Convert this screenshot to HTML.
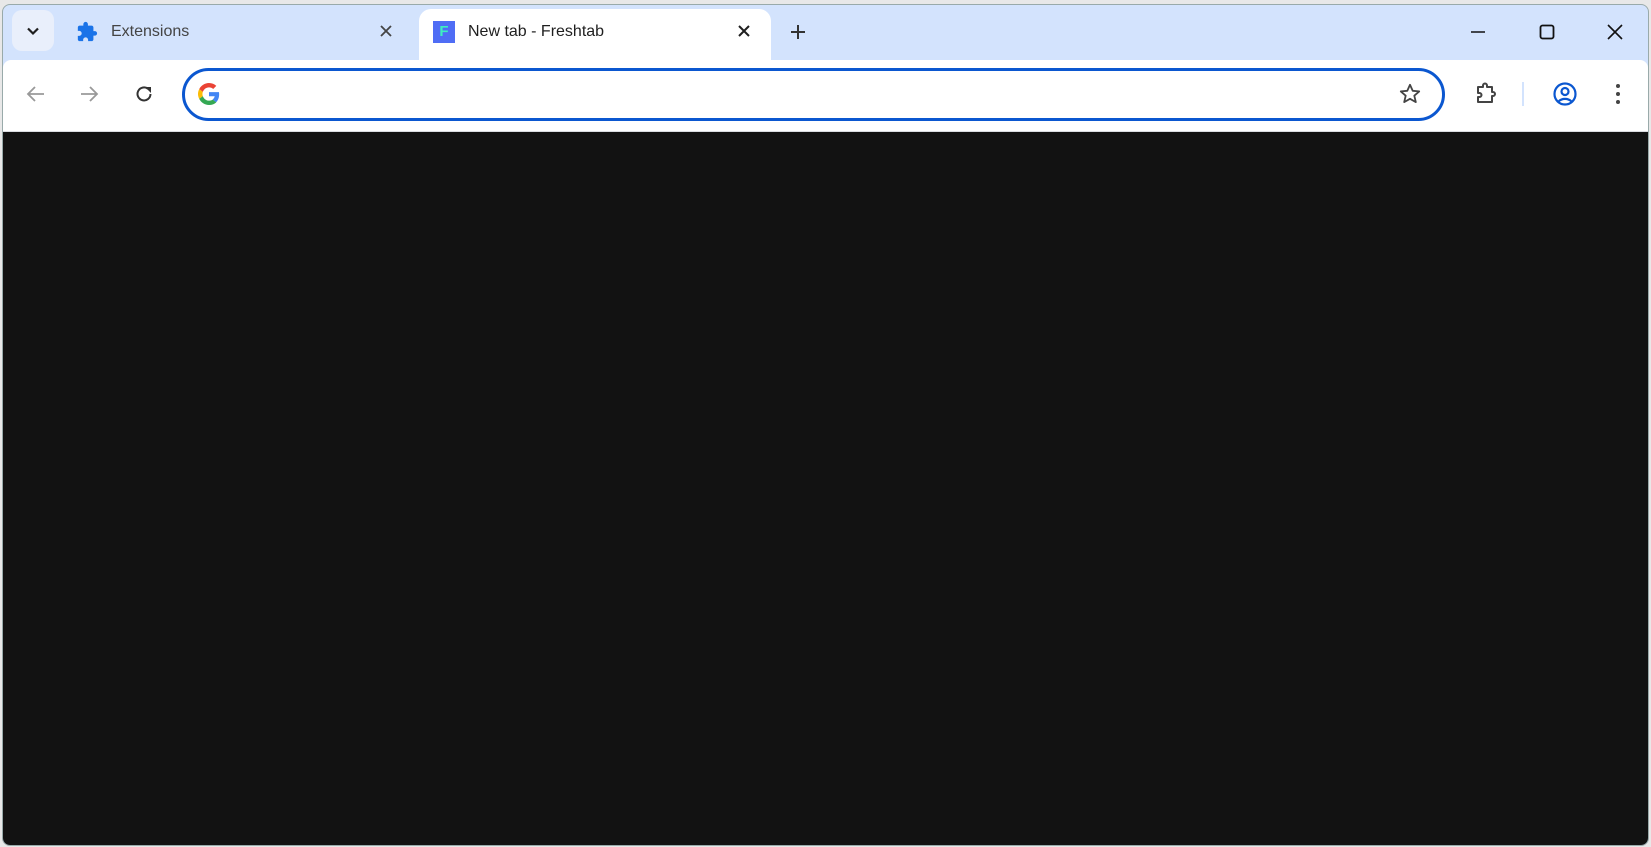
<!DOCTYPE html>
<html><head><meta charset="utf-8"><style>
*{margin:0;padding:0;box-sizing:border-box}
body{width:1651px;height:847px;background:#e8e8e8;position:relative;overflow:hidden;font-family:"Liberation Sans",sans-serif}
.win{position:absolute;left:2px;top:4px;width:1647px;height:842px;background:#d3e3fd;border-radius:8px;overflow:hidden;border:1px solid #9aa}
.abs{position:absolute}
.toolbar{position:absolute;left:0;top:55px;width:100%;height:71px;background:#fff;border-radius:8px 8px 0 0}
.content{position:absolute;left:0;top:126px;width:100%;bottom:0;background:#121212;border-top:1px solid #dadce0}
.tabtxt{font-size:16px;color:#1f1f1f;position:absolute}
</style></head><body>
<div class="win">
  <div class="abs" style="left:9px;top:5px;width:42px;height:41px;background:#e9effb;border-radius:10px"></div>
  <svg class="abs" style="left:21px;top:17px" width="18" height="18" viewBox="0 0 18 18"><path d="M4 6.5l5 5 5-5" fill="none" stroke="#1f1f1f" stroke-width="2.2"/></svg>
  <svg class="abs" style="left:73px;top:16px" width="22" height="22" viewBox="0 0 24 24"><path fill="#1a73e8" d="M20.5 11H19V7c0-1.1-.9-2-2-2h-4V3.5a2.5 2.5 0 0 0-5 0V5H4c-1.1 0-2 .9-2 2v3.8h1.5c1.5 0 2.7 1.2 2.7 2.7S5 16.2 3.5 16.2H2V20c0 1.1.9 2 2 2h3.8v-1.5c0-1.5 1.2-2.7 2.7-2.7s2.7 1.2 2.7 2.7V22H17c1.1 0 2-.9 2-2v-4h1.5a2.5 2.5 0 0 0 0-5z"/></svg>
  <div class="tabtxt" style="left:108px;top:18px;color:#444">Extensions</div>
  <svg class="abs" style="left:375px;top:18px" width="16" height="16" viewBox="0 0 16 16"><path d="M3 3l10 10M13 3L3 13" stroke="#444" stroke-width="1.8"/></svg>
  <div class="abs" style="left:416px;top:4px;width:352px;height:60px;background:#fff;border-radius:12px 12px 0 0"></div>
  <div class="abs" style="left:430px;top:16px;width:22px;height:22px;background:#4f6df5;color:#3ef0c0;font-weight:bold;font-size:15px;text-align:center;line-height:22px">F</div>
  <div class="tabtxt" style="left:465px;top:18px">New tab - Freshtab</div>
  <svg class="abs" style="left:733px;top:18px" width="16" height="16" viewBox="0 0 16 16"><path d="M3 3l10 10M13 3L3 13" stroke="#1f1f1f" stroke-width="2"/></svg>
  <svg class="abs" style="left:786px;top:18px" width="18" height="18" viewBox="0 0 18 18"><path d="M9 2v14M2 9h14" stroke="#333" stroke-width="2"/></svg>
  <svg class="abs" style="left:1466px;top:18px" width="18" height="18"><path d="M2 9h14" stroke="#111" stroke-width="1.6"/></svg>
  <svg class="abs" style="left:1535px;top:18px" width="18" height="18"><rect x="2.5" y="2.5" width="13" height="13" rx="2" fill="none" stroke="#111" stroke-width="1.8"/></svg>
  <svg class="abs" style="left:1603px;top:18px" width="18" height="18"><path d="M2 2l14 14M16 2L2 16" stroke="#111" stroke-width="1.6"/></svg>
  <div class="toolbar">
    <svg class="abs" style="left:22px;top:23px" width="22" height="22" viewBox="0 0 22 22"><path d="M19 11H4M10 4l-7 7 7 7" fill="none" stroke="#999" stroke-width="1.8"/></svg>
    <svg class="abs" style="left:75px;top:23px" width="22" height="22" viewBox="0 0 22 22"><path d="M3 11h15M12 4l7 7-7 7" fill="none" stroke="#999" stroke-width="1.8"/></svg>
    <svg class="abs" style="left:130px;top:23px" width="22" height="22" viewBox="0 0 22 22"><path d="M17.5 11A6.5 6.5 0 1 1 15 5.8" fill="none" stroke="#333" stroke-width="2"/><path d="M12 4h6v6z" fill="#333"/></svg>
    <div class="abs" style="left:179px;top:8px;width:1263px;height:53px;border:3px solid #0b57d0;border-radius:27px;background:#fff"></div>
    <svg class="abs" style="left:195px;top:23px" width="22" height="22" viewBox="0 0 48 48"><path fill="#EA4335" d="M24 9.5c3.5 0 6.6 1.2 9.1 3.6l6.8-6.8C35.8 2.4 30.3 0 24 0 14.6 0 6.6 5.4 2.7 13.3l7.9 6.1C12.5 13.7 17.8 9.5 24 9.5z"/><path fill="#4285F4" d="M46.1 24.5c0-1.6-.1-3.1-.4-4.5H24v9h12.4c-.5 2.9-2.2 5.3-4.6 7l7.7 6c4.5-4.2 6.6-10.3 6.6-17.5z"/><path fill="#FBBC05" d="M10.5 28.6c-.5-1.4-.8-3-.8-4.6s.3-3.2.8-4.6l-7.9-6.1C1 16.6 0 20.2 0 24s1 7.4 2.7 10.7l7.8-6.1z"/><path fill="#34A853" d="M24 48c6.5 0 11.9-2.1 15.9-5.8l-7.7-6c-2.2 1.5-5 2.3-8.2 2.3-6.2 0-11.5-4.2-13.4-9.9l-7.9 6.1C6.6 42.6 14.6 48 24 48z"/></svg>
    <svg class="abs" style="left:1395px;top:22px" width="24" height="24" viewBox="0 0 24 24"><path d="M12 2.8l2.7 6 6.5.6-4.9 4.3 1.5 6.4L12 16.8l-5.8 3.3 1.5-6.4-4.9-4.3 6.5-.6z" fill="none" stroke="#444" stroke-width="1.8" stroke-linejoin="round"/></svg>
    <svg class="abs" style="left:1470px;top:21px" width="26" height="26" viewBox="0 0 26 26"><path d="M5 6h5V4.5a2 2 0 0 1 4 0V6h5v5h1a2 2 0 0 1 0 4h-1v6H5v-5h1.5a2 2 0 0 0 0-4H5z" fill="none" stroke="#444" stroke-width="2" stroke-linejoin="round"/></svg>
    <div class="abs" style="left:1519px;top:22px;width:2px;height:24px;background:#d3e3fd"></div>
    <svg class="abs" style="left:1549px;top:21px" width="26" height="26" viewBox="0 0 26 26"><circle cx="13" cy="13" r="10.5" fill="none" stroke="#0b57d0" stroke-width="2.2"/><circle cx="13" cy="10.5" r="3.5" fill="none" stroke="#0b57d0" stroke-width="2.2"/><path d="M6.5 20.5c3.5-3.5 9.5-3.5 13 0" fill="none" stroke="#0b57d0" stroke-width="2.2"/></svg>
    <svg class="abs" style="left:1605px;top:22px" width="20" height="24" viewBox="0 0 20 24"><circle cx="10" cy="4" r="2" fill="#444"/><circle cx="10" cy="12" r="2" fill="#444"/><circle cx="10" cy="20" r="2" fill="#444"/></svg>
  </div>
  <div class="content"></div>
</div>
</body></html>
